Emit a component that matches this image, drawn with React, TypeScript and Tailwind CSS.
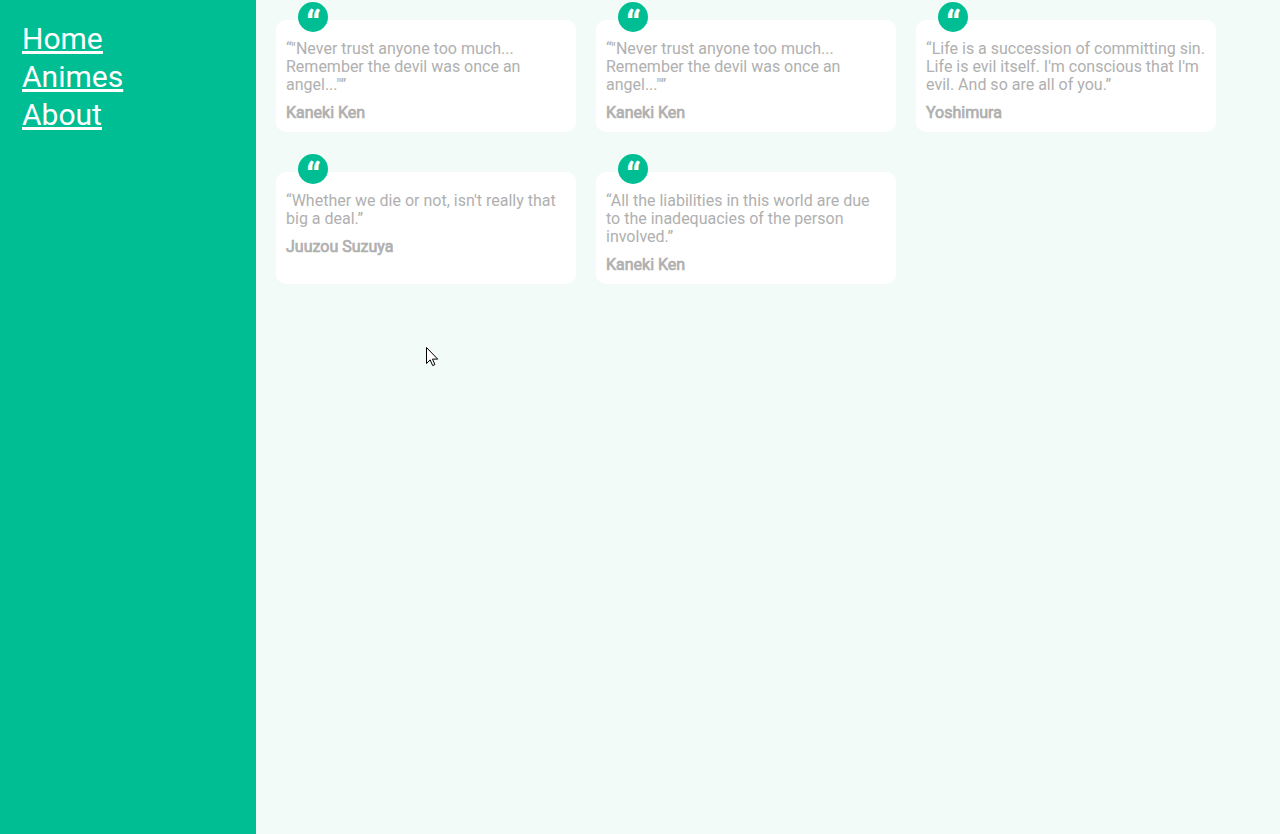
const quotes = [
  { text: '"Never trust anyone too much... Remember the devil was once an angel..."', author: 'Kaneki Ken' },
  { text: '"Never trust anyone too much... Remember the devil was once an angel..."', author: 'Kaneki Ken' },
  { text: "Life is a succession of committing sin. Life is evil itself. I'm conscious that I'm evil. And so are all of you.", author: 'Yoshimura' },
  { text: "Whether we die or not, isn't really that big a deal.", author: 'Juuzou Suzuya' },
  { text: 'All the liabilities in this world are due to the inadequacies of the person involved.', author: 'Kaneki Ken' },
];

function QuoteCard({ text, author }: { text: string; author: string }) {
  return (
    <article className="relative min-h-28 rounded-[10px] bg-white px-2.5 pt-5">
      <span className="absolute -top-[18px] left-[22px] flex size-[30px] justify-center overflow-hidden rounded-full bg-[#00be93] pl-px text-[37px] leading-[46px] font-bold text-white">“</span>
      <p className="text-base leading-[18px]">{`“${text}”`}</p>
      <p className="mt-2.5 text-base leading-[18px] [-webkit-text-stroke:0.7px_#b0b0b0]">{author}</p>
    </article>
  );
}

export default function App() {
  return (
    <div className="flex h-screen overflow-hidden bg-[#f2fbf8] font-['Roboto',sans-serif] text-[#b0b0b0]">
      <nav className="flex w-64 shrink-0 flex-col items-start bg-[#00be93] px-[22px] pt-5 text-[30px] leading-[38px] text-white underline">
        <a href="#home">Home</a>
        <a href="#animes">Animes</a>
        <a href="#about">About</a>
      </nav>
      <main className="grid flex-1 grid-cols-[repeat(3,300px)] content-start gap-x-5 gap-y-10 p-5">
        {quotes.map((q, i) => <QuoteCard key={i} {...q} />)}
      </main>
      <svg className="absolute top-[346px] left-[425px]" width="14" height="21" viewBox="0 0 14 21">
        <path d="M1.5 1.5v16l3.7-3.6 2.5 5.7 2.2-1-2.4-5.5h5.2z" fill="#fff" stroke="#000" />
      </svg>
    </div>
  );
}
